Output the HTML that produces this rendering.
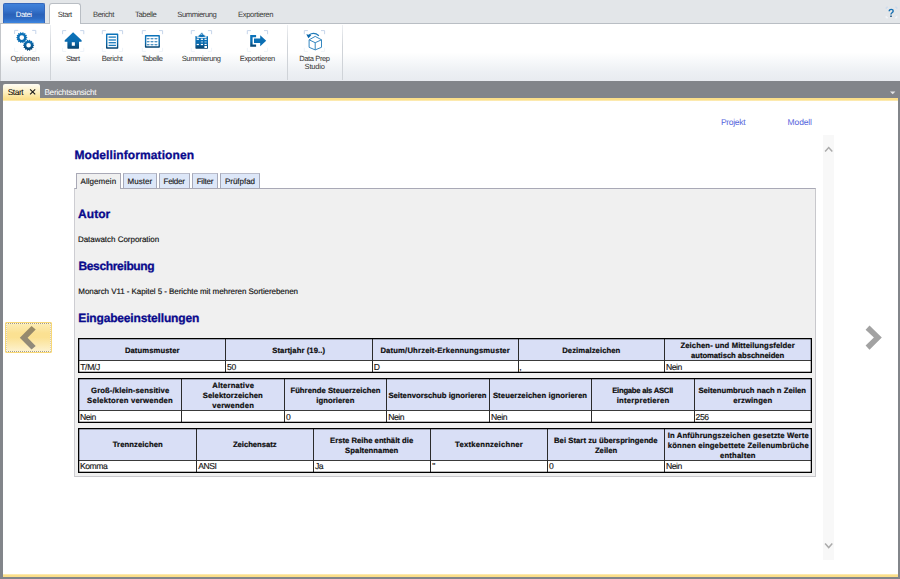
<!DOCTYPE html>
<html lang="de">
<head>
<meta charset="utf-8">
<title>Modellinformationen</title>
<style>
*{box-sizing:border-box;margin:0;padding:0}
html,body{width:900px;height:579px;overflow:hidden;background:#fff}
body{position:relative;font-family:"Liberation Sans",sans-serif;text-rendering:geometricPrecision}
.a{position:absolute}
.t{position:absolute;white-space:nowrap;line-height:1}
svg{position:absolute;left:0;top:0}
</style>
</head>
<body>
<div class="a" style="left:0px;top:0px;width:900px;height:23px;background:#e3e6e9;"></div>
<div class="a" style="left:0px;top:23px;width:900px;height:58px;background:linear-gradient(#ffffff 0%,#ffffff 50%,#f5f7f9 68%,#eceff3 86%,#e8ebf0 100%);border-top:1px solid #b9bec4;"></div>
<div class="a" style="left:0px;top:24px;width:1px;height:57px;background:#c3c6ca;"></div>
<div class="a" style="left:3px;top:3px;width:42px;height:20px;background:linear-gradient(#3f82da 0%,#3572cb 35%,#2a62b9 55%,#2d69c2 75%,#3d86e0 100%);border-radius:2px 2px 0 0;border:1px solid #3467bb;border-bottom:none;"></div>
<div class="a" style="left:49px;top:3px;width:32px;height:21px;background:#fff;border-radius:3px 3px 0 0;border:1px solid #b9bec4;border-bottom:none;"></div>
<span class="t" style="left:15.80px;top:10px;font-size:7.7px;line-height:9px;letter-spacing:-0.444px;color:#ffffff;">Datei</span>
<span class="t" style="left:57.80px;top:10px;font-size:7.7px;line-height:9px;letter-spacing:-0.450px;color:#3c3c3c;">Start</span>
<span class="t" style="left:93.00px;top:10px;font-size:7.7px;line-height:9px;letter-spacing:-0.444px;color:#3c3c3c;">Bericht</span>
<span class="t" style="left:135.10px;top:10px;font-size:7.7px;line-height:9px;letter-spacing:-0.450px;color:#3c3c3c;">Tabelle</span>
<span class="t" style="left:177.30px;top:10px;font-size:7.7px;line-height:9px;letter-spacing:-0.450px;color:#3c3c3c;">Summierung</span>
<span class="t" style="left:237.90px;top:10px;font-size:7.7px;line-height:9px;letter-spacing:-0.368px;color:#3c3c3c;">Exportieren</span>
<span class="t" style="left:888.40px;top:6px;font-size:12px;font-weight:bold;line-height:14px;letter-spacing:0.000px;color:transparent;transform:scaleX(.88);transform-origin:0 0;background:linear-gradient(#1576bd 0%,#0e68ab 55%,#073a68 80%,#073a68 100%);-webkit-background-clip:text;background-clip:text;">?</span>
<div class="a" style="left:50px;top:25px;width:1px;height:55px;background:linear-gradient(#eef0f3,#cfd3d8 40%,#cfd3d8 100%);"></div>
<div class="a" style="left:287px;top:25px;width:1px;height:55px;background:linear-gradient(#eef0f3,#cfd3d8 40%,#cfd3d8 100%);"></div>
<div class="a" style="left:342px;top:25px;width:1px;height:55px;background:linear-gradient(#eef0f3,#cfd3d8 40%,#cfd3d8 100%);"></div>
<span class="t" style="left:10.40px;top:54px;font-size:7.5px;line-height:9px;letter-spacing:-0.163px;color:#333;">Optionen</span>
<span class="t" style="left:65.90px;top:54px;font-size:7.5px;line-height:9px;letter-spacing:-0.435px;color:#333;">Start</span>
<span class="t" style="left:101.70px;top:54px;font-size:7.5px;line-height:9px;letter-spacing:-0.374px;color:#333;">Bericht</span>
<span class="t" style="left:141.80px;top:54px;font-size:7.5px;line-height:9px;letter-spacing:-0.450px;color:#333;">Tabelle</span>
<span class="t" style="left:181.70px;top:54px;font-size:7.5px;line-height:9px;letter-spacing:-0.357px;color:#333;">Summierung</span>
<span class="t" style="left:239.70px;top:54px;font-size:7.5px;line-height:9px;letter-spacing:-0.285px;color:#333;">Exportieren</span>
<span class="t" style="left:299.20px;top:54px;font-size:7.5px;line-height:9px;letter-spacing:-0.371px;color:#333;">Data Prep</span>
<span class="t" style="left:304.60px;top:62px;font-size:7.5px;line-height:9px;letter-spacing:-0.173px;color:#333;">Studio</span>
<div class="a" style="left:0px;top:81px;width:900px;height:17px;background:#82858a;"></div>
<div class="a" style="left:3px;top:98px;width:895px;height:3px;background:linear-gradient(#fbdf8a 0%,#fbdf8a 60%,#fdf1c8 100%);"></div>
<div class="a" style="left:3px;top:84px;width:37px;height:15px;background:linear-gradient(#fffdf4 0%,#fdf0c0 55%,#fbdf8a 100%);border-radius:2px 2px 0 0;"></div>
<span class="t" style="left:7.70px;top:87px;font-size:8.4px;line-height:10px;letter-spacing:-0.450px;color:#000;">Start</span>
<span class="t" style="left:44.40px;top:88px;font-size:8.2px;line-height:9px;letter-spacing:-0.236px;color:#ffffff;">Berichtsansicht</span>
<div class="a" style="left:0px;top:81px;width:3px;height:498px;background:#82858a;"></div>
<div class="a" style="left:898px;top:81px;width:2px;height:498px;background:#82858a;"></div>
<div class="a" style="left:3px;top:574px;width:895px;height:3px;background:linear-gradient(#fdf1c8 0%,#fbdf8a 40%,#fbdf8a 100%);"></div>
<div class="a" style="left:0px;top:577px;width:900px;height:2px;background:#82858a;"></div>
<span class="t" style="left:720.90px;top:117px;font-size:8.5px;line-height:10px;letter-spacing:-0.293px;color:#5465dc;">Projekt</span>
<span class="t" style="left:787.60px;top:117px;font-size:8.5px;line-height:10px;letter-spacing:-0.128px;color:#5465dc;">Modell</span>
<div class="a" style="left:823px;top:135px;width:11px;height:425px;background:#f8f8f8;"></div>
<span class="t" style="left:74.40px;top:148px;font-size:12px;font-weight:bold;line-height:14px;letter-spacing:0.089px;color:#0a0a8c;-webkit-text-stroke:.3px #0a0a8c;">Modellinformationen</span>
<div class="a" style="left:74px;top:188px;width:742px;height:289px;background:#f0f0f0;border:1px solid #c8c8cc;border-top-color:#a9a9b6;border-left-color:#cdcdd2;"></div>
<div class="a" style="left:76px;top:173px;width:45px;height:16px;background:#f0f0f0;border:1px solid #a9a9b6;border-bottom:none;"></div>
<span class="t" style="left:80.60px;top:177px;font-size:8px;line-height:9px;letter-spacing:0.046px;color:#141414;-webkit-text-stroke:.15px #222;">Allgemein</span>
<div class="a" style="left:123px;top:173px;width:34px;height:15px;background:#dde7f8;border:1px solid #a7aaba;border-top-color:#b9bccb;border-bottom:none;"></div>
<span class="t" style="left:127.60px;top:177px;font-size:8px;line-height:9px;letter-spacing:0.030px;color:#141414;-webkit-text-stroke:.15px #222;">Muster</span>
<div class="a" style="left:159px;top:173px;width:31px;height:15px;background:#dde7f8;border:1px solid #a7aaba;border-top-color:#b9bccb;border-bottom:none;"></div>
<span class="t" style="left:163.60px;top:177px;font-size:8px;line-height:9px;letter-spacing:-0.295px;color:#141414;-webkit-text-stroke:.15px #222;">Felder</span>
<div class="a" style="left:192px;top:173px;width:26px;height:15px;background:#dde7f8;border:1px solid #a7aaba;border-top-color:#b9bccb;border-bottom:none;"></div>
<span class="t" style="left:196.70px;top:177px;font-size:8px;line-height:9px;letter-spacing:-0.235px;color:#141414;-webkit-text-stroke:.15px #222;">Filter</span>
<div class="a" style="left:220px;top:173px;width:40px;height:15px;background:#dde7f8;border:1px solid #a7aaba;border-top-color:#b9bccb;border-bottom:none;"></div>
<span class="t" style="left:225.00px;top:177px;font-size:8px;line-height:9px;letter-spacing:-0.034px;color:#141414;-webkit-text-stroke:.15px #222;">Prüfpfad</span>
<span class="t" style="left:78.10px;top:207px;font-size:12px;font-weight:bold;line-height:14px;letter-spacing:0.052px;color:#0a0a8c;-webkit-text-stroke:.3px #0a0a8c;">Autor</span>
<span class="t" style="left:77.90px;top:235px;font-size:8px;line-height:9px;letter-spacing:-0.026px;color:#0a0a0a;-webkit-text-stroke:.15px #222;">Datawatch Corporation</span>
<span class="t" style="left:78.40px;top:259px;font-size:12px;font-weight:bold;line-height:14px;letter-spacing:-0.338px;color:#0a0a8c;-webkit-text-stroke:.3px #0a0a8c;">Beschreibung</span>
<span class="t" style="left:78.30px;top:287px;font-size:8px;line-height:9px;letter-spacing:-0.064px;color:#0a0a0a;-webkit-text-stroke:.15px #222;">Monarch V11 - Kapitel 5 - Berichte mit mehreren Sortierebenen</span>
<span class="t" style="left:78.30px;top:311px;font-size:12px;font-weight:bold;line-height:14px;letter-spacing:-0.159px;color:#0a0a8c;-webkit-text-stroke:.3px #0a0a8c;">Eingabeeinstellungen</span>
<div class="a" style="left:78px;top:338px;width:734px;height:35px;background:#000;"></div>
<div class="a" style="left:79px;top:339px;width:732px;height:21px;background:#d9dff6;"></div>
<div class="a" style="left:79px;top:360px;width:732px;height:1px;background:#3a3a3a;"></div>
<div class="a" style="left:79px;top:361px;width:732px;height:11px;background:#fff;"></div>
<div class="a" style="left:225px;top:339px;width:1px;height:33px;background:#2b2b2b;"></div>
<div class="a" style="left:372px;top:339px;width:1px;height:33px;background:#2b2b2b;"></div>
<div class="a" style="left:518px;top:339px;width:1px;height:33px;background:#2b2b2b;"></div>
<div class="a" style="left:664px;top:339px;width:1px;height:33px;background:#2b2b2b;"></div>
<div class="a" style="left:79px;top:339px;width:732px;height:1px;background:rgba(0,0,0,.28);"></div>
<div class="a" style="left:79px;top:371px;width:732px;height:1px;background:rgba(0,0,0,.28);"></div>
<div class="a" style="left:79px;top:339px;width:1px;height:33px;background:rgba(0,0,0,.28);"></div>
<div class="a" style="left:810px;top:339px;width:1px;height:33px;background:rgba(0,0,0,.28);"></div>
<div class="a" style="left:78px;top:378px;width:734px;height:45px;background:#000;"></div>
<div class="a" style="left:79px;top:379px;width:732px;height:31px;background:#d9dff6;"></div>
<div class="a" style="left:79px;top:410px;width:732px;height:1px;background:#3a3a3a;"></div>
<div class="a" style="left:79px;top:411px;width:732px;height:11px;background:#fff;"></div>
<div class="a" style="left:181px;top:379px;width:1px;height:43px;background:#2b2b2b;"></div>
<div class="a" style="left:284px;top:379px;width:1px;height:43px;background:#2b2b2b;"></div>
<div class="a" style="left:386px;top:379px;width:1px;height:43px;background:#2b2b2b;"></div>
<div class="a" style="left:489px;top:379px;width:1px;height:43px;background:#2b2b2b;"></div>
<div class="a" style="left:591px;top:379px;width:1px;height:43px;background:#2b2b2b;"></div>
<div class="a" style="left:694px;top:379px;width:1px;height:43px;background:#2b2b2b;"></div>
<div class="a" style="left:79px;top:379px;width:732px;height:1px;background:rgba(0,0,0,.28);"></div>
<div class="a" style="left:79px;top:421px;width:732px;height:1px;background:rgba(0,0,0,.28);"></div>
<div class="a" style="left:79px;top:379px;width:1px;height:43px;background:rgba(0,0,0,.28);"></div>
<div class="a" style="left:810px;top:379px;width:1px;height:43px;background:rgba(0,0,0,.28);"></div>
<div class="a" style="left:78px;top:428px;width:734px;height:45px;background:#000;"></div>
<div class="a" style="left:79px;top:429px;width:732px;height:31px;background:#d9dff6;"></div>
<div class="a" style="left:79px;top:460px;width:732px;height:1px;background:#3a3a3a;"></div>
<div class="a" style="left:79px;top:461px;width:732px;height:11px;background:#fff;"></div>
<div class="a" style="left:196px;top:429px;width:1px;height:43px;background:#2b2b2b;"></div>
<div class="a" style="left:313px;top:429px;width:1px;height:43px;background:#2b2b2b;"></div>
<div class="a" style="left:430px;top:429px;width:1px;height:43px;background:#2b2b2b;"></div>
<div class="a" style="left:547px;top:429px;width:1px;height:43px;background:#2b2b2b;"></div>
<div class="a" style="left:664px;top:429px;width:1px;height:43px;background:#2b2b2b;"></div>
<div class="a" style="left:79px;top:429px;width:732px;height:1px;background:rgba(0,0,0,.28);"></div>
<div class="a" style="left:79px;top:471px;width:732px;height:1px;background:rgba(0,0,0,.28);"></div>
<div class="a" style="left:79px;top:429px;width:1px;height:43px;background:rgba(0,0,0,.28);"></div>
<div class="a" style="left:810px;top:429px;width:1px;height:43px;background:rgba(0,0,0,.28);"></div>
<span class="t" style="left:124.90px;top:346px;font-size:7.7px;font-weight:bold;line-height:9px;letter-spacing:0.071px;color:#0c0c0c;-webkit-text-stroke:.2px #0c0c0c;">Datumsmuster</span>
<span class="t" style="left:272.20px;top:346px;font-size:7.7px;font-weight:bold;line-height:9px;letter-spacing:0.075px;color:#0c0c0c;-webkit-text-stroke:.2px #0c0c0c;">Startjahr (19..)</span>
<span class="t" style="left:380.40px;top:346px;font-size:7.7px;font-weight:bold;line-height:9px;letter-spacing:0.161px;color:#0c0c0c;-webkit-text-stroke:.2px #0c0c0c;">Datum/Uhrzeit-Erkennungsmuster</span>
<span class="t" style="left:562.20px;top:346px;font-size:7.7px;font-weight:bold;line-height:9px;letter-spacing:0.066px;color:#0c0c0c;-webkit-text-stroke:.2px #0c0c0c;">Dezimalzeichen</span>
<span class="t" style="left:680.40px;top:341px;font-size:7.7px;font-weight:bold;line-height:9px;letter-spacing:0.098px;color:#0c0c0c;-webkit-text-stroke:.2px #0c0c0c;">Zeichen- und Mitteilungsfelder</span>
<span class="t" style="left:691.10px;top:351px;font-size:7.7px;font-weight:bold;line-height:9px;letter-spacing:-0.057px;color:#0c0c0c;-webkit-text-stroke:.2px #0c0c0c;">automatisch abschneiden</span>
<span class="t" style="left:80.20px;top:362px;font-size:8.6px;line-height:10px;letter-spacing:-0.349px;color:#141414;-webkit-text-stroke:.15px #222;">T/M/J</span>
<span class="t" style="left:227.10px;top:362px;font-size:8.6px;line-height:10px;letter-spacing:-0.450px;color:#141414;-webkit-text-stroke:.15px #222;">50</span>
<span class="t" style="left:373.80px;top:362px;font-size:8.6px;line-height:10px;letter-spacing:0.000px;color:#141414;-webkit-text-stroke:.15px #222;">D</span>
<span class="t" style="left:519.30px;top:362px;font-size:8.6px;line-height:10px;letter-spacing:0.000px;color:#141414;-webkit-text-stroke:.15px #222;">,</span>
<span class="t" style="left:666.00px;top:362px;font-size:8.6px;line-height:10px;letter-spacing:-0.450px;color:#141414;-webkit-text-stroke:.15px #222;">Nein</span>
<span class="t" style="left:91.10px;top:386px;font-size:7.7px;font-weight:bold;line-height:9px;letter-spacing:0.102px;color:#0c0c0c;-webkit-text-stroke:.2px #0c0c0c;">Groß-/klein-sensitive</span>
<span class="t" style="left:87.10px;top:396px;font-size:7.7px;font-weight:bold;line-height:9px;letter-spacing:0.214px;color:#0c0c0c;-webkit-text-stroke:.2px #0c0c0c;">Selektoren verwenden</span>
<span class="t" style="left:212.20px;top:381px;font-size:7.7px;font-weight:bold;line-height:9px;letter-spacing:0.200px;color:#0c0c0c;-webkit-text-stroke:.2px #0c0c0c;">Alternative</span>
<span class="t" style="left:202.70px;top:391px;font-size:7.7px;font-weight:bold;line-height:9px;letter-spacing:0.112px;color:#0c0c0c;-webkit-text-stroke:.2px #0c0c0c;">Selektorzeichen</span>
<span class="t" style="left:212.20px;top:401px;font-size:7.7px;font-weight:bold;line-height:9px;letter-spacing:0.197px;color:#0c0c0c;-webkit-text-stroke:.2px #0c0c0c;">verwenden</span>
<span class="t" style="left:290.40px;top:386px;font-size:7.7px;font-weight:bold;line-height:9px;letter-spacing:0.042px;color:#0c0c0c;-webkit-text-stroke:.2px #0c0c0c;">Führende Steuerzeichen</span>
<span class="t" style="left:316.20px;top:396px;font-size:7.7px;font-weight:bold;line-height:9px;letter-spacing:0.061px;color:#0c0c0c;-webkit-text-stroke:.2px #0c0c0c;">ignorieren</span>
<span class="t" style="left:388.40px;top:391px;font-size:7.7px;font-weight:bold;line-height:9px;letter-spacing:0.031px;color:#0c0c0c;-webkit-text-stroke:.2px #0c0c0c;">Seitenvorschub ignorieren</span>
<span class="t" style="left:492.90px;top:391px;font-size:7.7px;font-weight:bold;line-height:9px;letter-spacing:0.096px;color:#0c0c0c;-webkit-text-stroke:.2px #0c0c0c;">Steuerzeichen ignorieren</span>
<span class="t" style="left:612.20px;top:386px;font-size:7.7px;font-weight:bold;line-height:9px;letter-spacing:-0.255px;color:#0c0c0c;-webkit-text-stroke:.2px #0c0c0c;">Eingabe als ASCII</span>
<span class="t" style="left:616.70px;top:396px;font-size:7.7px;font-weight:bold;line-height:9px;letter-spacing:0.228px;color:#0c0c0c;-webkit-text-stroke:.2px #0c0c0c;">interpretieren</span>
<span class="t" style="left:698.40px;top:386px;font-size:7.7px;font-weight:bold;line-height:9px;letter-spacing:0.016px;color:#0c0c0c;-webkit-text-stroke:.2px #0c0c0c;">Seitenumbruch nach n Zeilen</span>
<span class="t" style="left:733.30px;top:396px;font-size:7.7px;font-weight:bold;line-height:9px;letter-spacing:0.156px;color:#0c0c0c;-webkit-text-stroke:.2px #0c0c0c;">erzwingen</span>
<span class="t" style="left:80.00px;top:412px;font-size:8.6px;line-height:10px;letter-spacing:-0.450px;color:#141414;-webkit-text-stroke:.15px #222;">Nein</span>
<span class="t" style="left:286.00px;top:412px;font-size:8.6px;line-height:10px;letter-spacing:0.000px;color:#141414;-webkit-text-stroke:.15px #222;">0</span>
<span class="t" style="left:388.20px;top:412px;font-size:8.6px;line-height:10px;letter-spacing:-0.450px;color:#141414;-webkit-text-stroke:.15px #222;">Nein</span>
<span class="t" style="left:491.10px;top:412px;font-size:8.6px;line-height:10px;letter-spacing:-0.450px;color:#141414;-webkit-text-stroke:.15px #222;">Nein</span>
<span class="t" style="left:695.60px;top:412px;font-size:8.6px;line-height:10px;letter-spacing:-0.450px;color:#141414;-webkit-text-stroke:.15px #222;">256</span>
<span class="t" style="left:112.70px;top:440px;font-size:7.7px;font-weight:bold;line-height:9px;letter-spacing:0.090px;color:#0c0c0c;-webkit-text-stroke:.2px #0c0c0c;">Trennzeichen</span>
<span class="t" style="left:232.90px;top:440px;font-size:7.7px;font-weight:bold;line-height:9px;letter-spacing:-0.028px;color:#0c0c0c;-webkit-text-stroke:.2px #0c0c0c;">Zeichensatz</span>
<span class="t" style="left:330.00px;top:436px;font-size:7.7px;font-weight:bold;line-height:9px;letter-spacing:0.013px;color:#0c0c0c;-webkit-text-stroke:.2px #0c0c0c;">Erste Reihe enthält die</span>
<span class="t" style="left:345.10px;top:446px;font-size:7.7px;font-weight:bold;line-height:9px;letter-spacing:0.061px;color:#0c0c0c;-webkit-text-stroke:.2px #0c0c0c;">Spaltennamen</span>
<span class="t" style="left:455.10px;top:440px;font-size:7.7px;font-weight:bold;line-height:9px;letter-spacing:0.222px;color:#0c0c0c;-webkit-text-stroke:.2px #0c0c0c;">Textkennzeichner</span>
<span class="t" style="left:554.00px;top:436px;font-size:7.7px;font-weight:bold;line-height:9px;letter-spacing:0.043px;color:#0c0c0c;-webkit-text-stroke:.2px #0c0c0c;">Bei Start zu überspringende</span>
<span class="t" style="left:594.90px;top:446px;font-size:7.7px;font-weight:bold;line-height:9px;letter-spacing:0.030px;color:#0c0c0c;-webkit-text-stroke:.2px #0c0c0c;">Zeilen</span>
<span class="t" style="left:667.80px;top:431px;font-size:7.7px;font-weight:bold;line-height:9px;letter-spacing:0.123px;color:#0c0c0c;-webkit-text-stroke:.2px #0c0c0c;">In Anführungszeichen gesetzte Werte</span>
<span class="t" style="left:667.80px;top:441px;font-size:7.7px;font-weight:bold;line-height:9px;letter-spacing:0.140px;color:#0c0c0c;-webkit-text-stroke:.2px #0c0c0c;">können eingebettete Zeilenumbrüche</span>
<span class="t" style="left:720.00px;top:451px;font-size:7.7px;font-weight:bold;line-height:9px;letter-spacing:0.172px;color:#0c0c0c;-webkit-text-stroke:.2px #0c0c0c;">enthalten</span>
<span class="t" style="left:80.00px;top:461px;font-size:8.6px;line-height:10px;letter-spacing:-0.450px;color:#141414;-webkit-text-stroke:.15px #222;">Komma</span>
<span class="t" style="left:198.20px;top:461px;font-size:8.6px;line-height:10px;letter-spacing:-0.450px;color:#141414;-webkit-text-stroke:.15px #222;">ANSI</span>
<span class="t" style="left:314.90px;top:461px;font-size:8.6px;line-height:10px;letter-spacing:-0.450px;color:#141414;-webkit-text-stroke:.15px #222;">Ja</span>
<span class="t" style="left:432.20px;top:461px;font-size:8.6px;line-height:10px;letter-spacing:0.000px;color:#141414;-webkit-text-stroke:.15px #222;">&quot;</span>
<span class="t" style="left:548.90px;top:461px;font-size:8.6px;line-height:10px;letter-spacing:0.000px;color:#141414;-webkit-text-stroke:.15px #222;">0</span>
<span class="t" style="left:666.00px;top:461px;font-size:8.6px;line-height:10px;letter-spacing:-0.450px;color:#141414;-webkit-text-stroke:.15px #222;">Nein</span>
<div class="a" style="left:5px;top:322px;width:47px;height:31px;background:linear-gradient(#fdeeb8 0%,#fbe192 35%,#fbe192 50%,#fdf3d2 100%);border:1px solid #f9d874;border-radius:1px;"></div>
<div class="a" style="left:6px;top:323px;width:45px;height:29px;background:transparent;border:1px solid rgba(255,255,255,.55);"></div>
<div class="a" style="left:6px;top:323px;width:45px;height:29px;background:transparent;border:1px dotted rgba(105,102,92,.62);border-left-color:rgba(105,102,92,.28);border-right-color:rgba(105,102,92,.28);"></div>
<svg width="900" height="579" viewBox="0 0 900 579">
<defs><linearGradient id="ib" x1="0" y1="0" x2="0" y2="1"><stop offset="0" stop-color="#0c74bb"/><stop offset=".55" stop-color="#0b6cb0"/><stop offset="1" stop-color="#07426d"/></linearGradient><linearGradient id="cg" x1="0" y1="0" x2="0" y2="1"><stop offset="0" stop-color="#9a8a62"/><stop offset="1" stop-color="#8e8a80"/></linearGradient></defs>
<path d="M14.6 34.0V30.4H18.2M32.199999999999996 30.4H35.8V34.0" fill="none" stroke="#c6d5eb" stroke-width="1"/>
<path d="M14.6 47.8V51.4H18.2M32.199999999999996 51.4H35.8V47.8" fill="none" stroke="#eef3f9" stroke-width="1"/>
<path d="M27.28 37.16L27.28 38.04L26.45 38.28L26.28 39.01L26.93 39.58L26.55 40.37L25.70 40.23L25.23 40.81L25.56 41.61L24.87 42.16L24.17 41.66L23.49 41.98L23.45 42.85L22.59 43.04L22.18 42.28L21.42 42.28L21.01 43.04L20.15 42.85L20.11 41.98L19.43 41.66L18.73 42.16L18.04 41.61L18.37 40.81L17.90 40.23L17.05 40.37L16.67 39.58L17.32 39.01L17.15 38.28L16.32 38.04L16.32 37.16L17.15 36.92L17.32 36.19L16.67 35.62L17.05 34.83L17.90 34.97L18.37 34.39L18.04 33.59L18.73 33.04L19.43 33.54L20.11 33.22L20.15 32.35L21.01 32.16L21.42 32.92L22.18 32.92L22.59 32.16L23.45 32.35L23.49 33.22L24.17 33.54L24.87 33.04L25.56 33.59L25.23 34.39L25.70 34.97L26.55 34.83L26.93 35.62L26.28 36.19L26.45 36.92ZM24.1 37.6A2.3 2.3 0 1 0 19.5 37.6A2.3 2.3 0 1 0 24.1 37.6ZM34.08 44.86L34.08 45.74L33.25 45.98L33.08 46.71L33.73 47.28L33.35 48.07L32.50 47.93L32.03 48.51L32.36 49.31L31.67 49.86L30.97 49.36L30.29 49.68L30.25 50.55L29.39 50.74L28.98 49.98L28.22 49.98L27.81 50.74L26.95 50.55L26.91 49.68L26.23 49.36L25.53 49.86L24.84 49.31L25.17 48.51L24.70 47.93L23.85 48.07L23.47 47.28L24.12 46.71L23.95 45.98L23.12 45.74L23.12 44.86L23.95 44.62L24.12 43.89L23.47 43.32L23.85 42.53L24.70 42.67L25.17 42.09L24.84 41.29L25.53 40.74L26.23 41.24L26.91 40.92L26.95 40.05L27.81 39.86L28.22 40.62L28.98 40.62L29.39 39.86L30.25 40.05L30.29 40.92L30.97 41.24L31.67 40.74L32.36 41.29L32.03 42.09L32.50 42.67L33.35 42.53L33.73 43.32L33.08 43.89L33.25 44.62ZM30.900000000000002 45.3A2.3 2.3 0 1 0 26.3 45.3A2.3 2.3 0 1 0 30.900000000000002 45.3Z" fill="url(#ib)" fill-rule="evenodd"/>
<path d="M62.6 34.2V30.6H66.2M80.2 30.6H83.8V34.2" fill="none" stroke="#c6d5eb" stroke-width="1"/>
<path d="M62.6 47.8V51.4H66.2M80.2 51.4H83.8V47.8" fill="none" stroke="#eef3f9" stroke-width="1"/>
<path d="M73.1 32.2L81.6 40.3V41.7H79V48.1Q79 48.7 78.4 48.7H68Q67.4 48.7 67.4 48.1V41.7H64.7V40.3ZM71.8 42.2V45.8H74.9V42.2Z" fill="url(#ib)" fill-rule="evenodd"/>
<path d="M102.3 34.2V30.6H105.89999999999999M119.0 30.6H122.6V34.2" fill="none" stroke="#c6d5eb" stroke-width="1"/>
<path d="M102.3 47.8V51.4H105.89999999999999M119.0 51.4H122.6V47.8" fill="none" stroke="#eef3f9" stroke-width="1"/>
<path d="M106.8 33.5H117.5Q118.3 33.5 118.3 34.3V47.9Q118.3 48.7 117.5 48.7H106.8Q106 48.7 106 47.9V34.3Q106 33.5 106.8 33.5ZM107.4 35V47.3H116.9V35Z" fill="url(#ib)" fill-rule="evenodd"/>
<rect x="108.6" y="36.45" width="7.3" height="1.3" fill="#1b7bbd"/>
<rect x="108.6" y="39.35" width="7.3" height="1.3" fill="#1b7bbd"/>
<rect x="108.6" y="42.050000000000004" width="7.3" height="1.3" fill="#1b7bbd"/>
<rect x="108.6" y="44.75" width="7.3" height="1.3" fill="#1b7bbd"/>
<path d="M142.3 34.2V30.6H145.9M159.0 30.6H162.6V34.2" fill="none" stroke="#c6d5eb" stroke-width="1"/>
<path d="M142.3 47.8V51.4H145.9M159.0 51.4H162.6V47.8" fill="none" stroke="#eef3f9" stroke-width="1"/>
<path d="M145.7 34.9H159.1Q159.9 34.9 159.9 35.7V46.9Q159.9 47.7 159.1 47.7H145.7Q144.9 47.7 144.9 46.9V35.7Q144.9 34.9 145.7 34.9ZM146.3 36.6V46.3H158.5V36.6Z" fill="url(#ib)" fill-rule="evenodd"/>
<rect x="146.79999999999998" y="38.0" width="2.6" height="1.2" rx=".5" fill="#0e6aab"/>
<rect x="150.7" y="38.0" width="2.6" height="1.2" rx=".5" fill="#0e6aab"/>
<rect x="154.6" y="38.0" width="2.6" height="1.2" rx=".5" fill="#0e6aab"/>
<rect x="146.4" y="38.2" width="12" height=".8" fill="#9cc4e0" opacity=".6"/>
<rect x="146.79999999999998" y="41.0" width="2.6" height="1.2" rx=".5" fill="#0e6aab"/>
<rect x="150.7" y="41.0" width="2.6" height="1.2" rx=".5" fill="#0e6aab"/>
<rect x="154.6" y="41.0" width="2.6" height="1.2" rx=".5" fill="#0e6aab"/>
<rect x="146.4" y="41.2" width="12" height=".8" fill="#9cc4e0" opacity=".6"/>
<rect x="146.79999999999998" y="44.0" width="2.6" height="1.2" rx=".5" fill="#0e6aab"/>
<rect x="150.7" y="44.0" width="2.6" height="1.2" rx=".5" fill="#0e6aab"/>
<rect x="154.6" y="44.0" width="2.6" height="1.2" rx=".5" fill="#0e6aab"/>
<rect x="146.4" y="44.2" width="12" height=".8" fill="#9cc4e0" opacity=".6"/>
<path d="M191.3 34.2V30.6H194.9M208.0 30.6H211.6V34.2" fill="none" stroke="#c6d5eb" stroke-width="1"/>
<path d="M191.3 47.8V51.4H194.9M208.0 51.4H211.6V47.8" fill="none" stroke="#eef3f9" stroke-width="1"/>
<path d="M195.4 36.4Q195.4 35.9 196 35.9H207.4Q208 35.9 208 36.4V48.1Q208 48.7 207.4 48.7H196Q195.4 48.7 195.4 48.1Z" fill="url(#ib)"/>
<path d="M197.4 37.5C197.9 35.6 199.2 34.7 200.3 34.3C200.6 33.2 201.2 32.8 201.8 32.8C202.4 32.8 203 33.2 203.3 34.3C204.4 34.7 205.7 35.6 206.2 37.5Z" fill="#0c70b5" stroke="#fff" stroke-width=".7"/>
<path d="M196.4 36.6Q201.8 38.9 207.2 36.6" fill="none" stroke="#fff" stroke-width=".7" opacity=".9"/>
<circle cx="201.8" cy="34.5" r=".55" fill="#d9e8f4"/>
<rect x="196.70000000000002" y="38.699999999999996" width="2.2" height="1.2" fill="#fff" opacity="1"/>
<rect x="200.8" y="38.699999999999996" width="2.2" height="1.2" fill="#fff" opacity="1"/>
<rect x="204.5" y="38.699999999999996" width="2.2" height="1.2" fill="#fff" opacity="1"/>
<rect x="200.8" y="41.3" width="2.2" height="1.2" fill="#fff" opacity="0.55"/>
<rect x="204.5" y="41.3" width="2.2" height="1.2" fill="#fff" opacity="0.55"/>
<rect x="196.70000000000002" y="43.9" width="2.2" height="1.2" fill="#fff" opacity="1"/>
<rect x="200.8" y="43.9" width="2.2" height="1.2" fill="#fff" opacity="1"/>
<rect x="204.5" y="43.9" width="2.2" height="1.2" fill="#fff" opacity="1"/>
<rect x="204.4" y="46" width="2.6" height="2" fill="#fff"/>
<path d="M247.3 34.2V30.6H250.9M264.0 30.6H267.6V34.2" fill="none" stroke="#c6d5eb" stroke-width="1"/>
<path d="M247.3 47.8V51.4H250.9M264.0 51.4H267.6V47.8" fill="none" stroke="#eef3f9" stroke-width="1"/>
<path d="M250.2 34.9H256.1V37.3H252.6V44.4H256.1V46.8H250.2Z" fill="url(#ib)"/>
<path d="M254 38.5H260.2V35.2L266.2 40.7L260.2 46.2V43H254Z" fill="#0b6fb4"/>
<path d="M304.3 34.2V30.6H307.90000000000003M321.0 30.6H324.6V34.2" fill="none" stroke="#c6d5eb" stroke-width="1"/>
<path d="M304.3 47.8V51.4H307.90000000000003M321.0 51.4H324.6V47.8" fill="none" stroke="#eef3f9" stroke-width="1"/>
<path d="M315.2 36.4L321.5 39.8V47.3L315.2 49.9L309.1 47.3V39.8ZM309.1 39.8L315.2 42.7L321.5 39.8M315.2 42.7V49.9" fill="none" stroke="#3587c0" stroke-width="1" stroke-linejoin="round"/>
<path d="M318.9 35.7Q314 31.6 309 35" fill="none" stroke="#1f7ab8" stroke-width="1.25"/>
<path d="M306.3 34.2L311.3 35.3L308.4 38.3Z" fill="#0a66aa"/>
<path d="M886.2 9V7.2H888M895 7.2H896.8V9" fill="none" stroke="#c9d9ef" stroke-width="1"/>
<path d="M886.2 16V17.8H888M895 17.8H896.8V16" fill="none" stroke="#f4f7fb" stroke-width="1"/>
<path d="M30.1 89.3L35.2 94.4M35.2 89.3L30.1 94.4" stroke="#1a1a1a" stroke-width="1.1" fill="none"/>
<path d="M890 91.4H895.4L892.7 94.3Z" fill="#e4e5e6"/>
<path d="M825.1 151.6L828.7 147.6L832.3 151.6" fill="none" stroke="#ababab" stroke-width="1.5"/>
<path d="M825.1 543.6L828.7 547.6L832.3 543.6" fill="none" stroke="#ababab" stroke-width="1.5"/>
<path d="M19.8 337.7L31.5 325.9L35.7 329.4L27.6 337.7L35.7 346L31.5 349.6Z" fill="url(#cg)"/>
<path d="M881.8 337.6L869.5 325.6L865.6 329.7L873.9 337.6L865.6 345.6L869.5 349.7Z" fill="#a2a2a2"/>
</svg>
</body>
</html>
